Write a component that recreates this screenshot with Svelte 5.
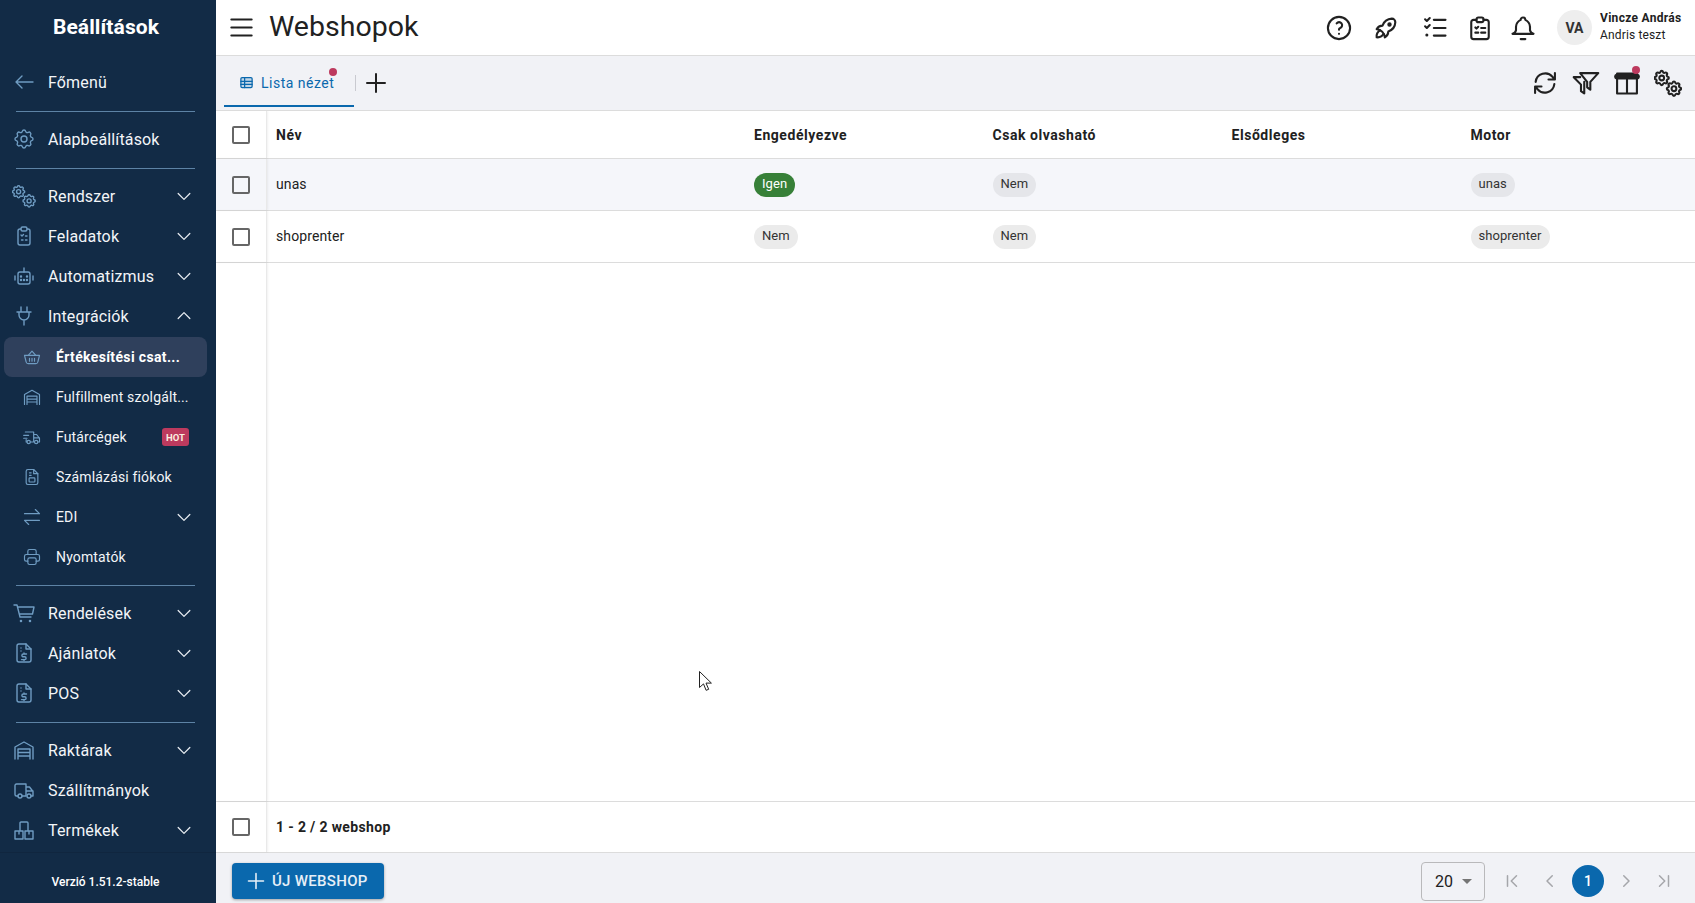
<script lang="ts">
  const gear = "M10.325 4.317c.426 -1.756 2.924 -1.756 3.35 0a1.724 1.724 0 0 0 2.573 1.066c1.543 -.94 3.31 .826 2.37 2.37a1.724 1.724 0 0 0 1.065 2.572c1.756 .426 1.756 2.924 0 3.35a1.724 1.724 0 0 0 -1.066 2.573c.94 1.543 -.826 3.31 -2.37 2.37a1.724 1.724 0 0 0 -2.572 1.065c-.426 1.756 -2.924 1.756 -3.35 0a1.724 1.724 0 0 0 -2.573 -1.066c-1.543 .94 -3.31 -.826 -2.37 -2.37a1.724 1.724 0 0 0 -1.065 -2.572c-1.756 -.426 -1.756 -2.924 0 -3.35a1.724 1.724 0 0 0 1.066 -2.573c-.94 -1.543 .826 -3.31 2.37 -2.37c1 .608 2.296 .07 2.572 -1.065z";
  const gearFull = `<path d="${gear}"/><circle cx="12" cy="12" r="3"/>`;
  const gearsInner = `<g transform="translate(-1.56 -.46) scale(.68)" style="stroke-width:var(--gw,2.6)">${gearFull}</g><g transform="translate(8.94 8.74) scale(.68)" style="stroke-width:var(--gw,2.6)">${gearFull}</g>`;

  const icons: Record<string, string> = {
    back: '<path d="M21 12H4M10 6l-6 6 6 6"/>',
    gear: gearFull,
    gears: gearsInner,
    task: '<path d="M9 5H8a2 2 0 0 0-2 2v12a2 2 0 0 0 2 2h8a2 2 0 0 0 2-2V7a2 2 0 0 0-2-2h-1"/><rect x="9" y="3" width="6" height="4" rx="1.5"/><path d="M9 11l1 1 1.5-1.5M13.5 12H15M9.5 16h1.5M13.5 16H15"/>',
    robot: '<rect x="6" y="8" width="12" height="12" rx="2"/><path d="M12 8V4M3 12v4M21 12v4"/><path d="M9 12.5h.01M15 12.5h.01M9 16h.01M12 16h.01M15 16h.01" stroke-width="2.4"/>',
    plug: '<path d="M9 8V3M15 8V3M5 8h14M7 8v3a5 5 0 0 0 10 0V8M12 16v5"/>',
    basket: '<path d="M7.5 10L12 5l4.5 5"/><path d="M3 10h18l-2 8a2.5 2.5 0 0 1-2.4 2H7.4A2.5 2.5 0 0 1 5 18z"/><path d="M9 13.5v3.5M12 13.5v3.5M15 13.5v3.5"/>',
    warehouse: '<path d="M3 21V9l9-5 9 5v12"/><path d="M6 21V11h12v10M6 14.5h12M6 18h12"/>',
    truck: '<circle cx="8" cy="18" r="2"/><circle cx="17" cy="18" r="2"/><path d="M6 18H4.5A1.5 1.5 0 0 1 3 16.5V7.5A1.5 1.5 0 0 1 4.5 6H14v12h-4M14 9h3.5l3.5 4.5V18h-2M14 13h7"/>',
    truckFast: '<circle cx="8" cy="18" r="2"/><circle cx="17" cy="18" r="2"/><path d="M6 18H5v-3M4 6h10v12h-4M2 10h6M2 13.5h4M14 9h3.5l3.5 4.5V18h-2M14 13h7"/>',
    invoice: '<path d="M14 3v5h5"/><path d="M17 21H7a2 2 0 0 1-2-2V5a2 2 0 0 1 2-2h7l5 5v11a2 2 0 0 1-2 2z"/><rect x="8.5" y="13" width="7" height="5" rx="1"/><path d="M9 7h2M9 10h2"/>',
    transfer: '<path d="M3 8h18M16 3l5 5M21 16H3M8 21l-5-5"/>',
    printer: '<path d="M17 17h2a2 2 0 0 0 2-2v-4a2 2 0 0 0-2-2H5a2 2 0 0 0-2 2v4a2 2 0 0 0 2 2h2"/><path d="M17 9V5a2 2 0 0 0-2-2H9a2 2 0 0 0-2 2v4"/><rect x="7" y="13" width="10" height="8" rx="2"/>',
    cart: '<path d="M2 4h3l3 12h11M5.6 6H22l-1.5 7H7.5"/><path d="M9 20h.01M18 20h.01" stroke-width="2.6"/>',
    quote: '<path d="M14 3v5h5"/><path d="M17 21H7a2 2 0 0 1-2-2V5a2 2 0 0 1 2-2h7l5 5v11a2 2 0 0 1-2 2z"/><path d="M14.5 13h-3.2a1.4 1.4 0 0 0 0 2.8h1.4a1.4 1.4 0 0 1 0 2.8H9.5M12 12v1M12 18.5v1M9 7h.01M9 10h.01"/>',
    boxes: '<path d="M3 13h8v8H3zM13 13h8v8h-8zM8 13V5a1 1 0 0 1 1-1h6a1 1 0 0 1 1 1v8M7 13v3M17 13v3"/>',
    help: '<circle cx="12" cy="12" r="9.5"/><path d="M12 17v.01M12 13.5a1.5 1.5 0 0 1 1-1.5 2.6 2.6 0 1 0-3-4"/>',
    rocket: '<path d="M4 13a8 8 0 0 1 7 7 6 6 0 0 0 3-5 9 9 0 0 0 6-8 3 3 0 0 0-3-3 9 9 0 0 0-8 6 6 6 0 0 0-5 3"/><path d="M7 14a6 6 0 0 0-3 6 6 6 0 0 0 6-3"/><circle cx="15" cy="9" r="1"/>',
    checks: '<path d="M3.5 4.5L5 6l2.5-2.5M3.5 10.5L5 12l2.5-2.5"/><path d="M5 18h.01" stroke-width="2.6"/><path d="M11 5h10M11 12h10M11 18.5h10"/>',
    clipboard: '<path d="M9 5H6.5a2 2 0 0 0-2 2v12.5a2 2 0 0 0 2 2h11a2 2 0 0 0 2-2V7a2 2 0 0 0-2-2H15"/><rect x="9" y="3" width="6" height="4" rx="1.5"/><path d="M8 11.5l1 1 1.5-1.5M13 12h3.5M8 16h2.5M13 16h3.5"/>',
    bell: '<path d="M10 5a2 2 0 1 1 4 0 7 7 0 0 1 4 6v3a4 4 0 0 0 3 3H3a4 4 0 0 0 3-3v-3a7 7 0 0 1 4-6"/><path d="M10 21.5h4"/>',
    refresh: '<path d="M4 11a8.2 8.2 0 0 1 14.5-4.2L20.5 9M20.5 3.5V9H15"/><path d="M20 13a8.2 8.2 0 0 1-14.5 4.2L3.5 15M3.5 20.5V15H9"/>',
    filter: '<path d="M7 3.5h15.5L15.7 11v6.7L13 15.7V11zM7 7H1.5l6.2 6.4V19l2.8 2V11"/>',
    columns: '<path d="M3.5 4h17v17h-17zM12 9v12"/><path d="M3.5 6.5h17" stroke-width="5"/>',
    tablist: '<rect x="3" y="4" width="18" height="16" rx="2" fill="currentColor" fill-opacity=".2"/><path d="M3 10h18M3 15h18M9 4v16"/>',
    plus: '<path d="M12 3v18M3 12h18"/>',
    menu: '<path d="M3 4.9h18M3 12h18M3 19.1h18"/>',
    down: '<path d="M5 9l7 7 7-7"/>',
    up: '<path d="M5 15l7-7 7 7"/>',
    first: '<path d="M6 5v14M18 5l-7 7 7 7"/>',
    prev: '<path d="M15 5l-7 7 7 7"/>',
    next: '<path d="M9 5l7 7-7 7"/>',
    last: '<path d="M18 5v14M6 5l7 7-7 7"/>',
  };

  type Item = { type?: "hr"; label?: string; icon?: string; caret?: "down" | "up"; sub?: boolean; active?: boolean; hot?: boolean };

  const nav: Item[] = [
    { label: "Főmenü", icon: "back" },
    { type: "hr" },
    { label: "Alapbeállítások", icon: "gear" },
    { type: "hr" },
    { label: "Rendszer", icon: "gears", caret: "down" },
    { label: "Feladatok", icon: "task", caret: "down" },
    { label: "Automatizmus", icon: "robot", caret: "down" },
    { label: "Integrációk", icon: "plug", caret: "up" },
    { label: "Értékesítési csat...", icon: "basket", sub: true, active: true },
    { label: "Fulfillment szolgált...", icon: "warehouse", sub: true },
    { label: "Futárcégek", icon: "truckFast", sub: true, hot: true },
    { label: "Számlázási fiókok", icon: "invoice", sub: true },
    { label: "EDI", icon: "transfer", sub: true, caret: "down" },
    { label: "Nyomtatók", icon: "printer", sub: true },
    { type: "hr" },
    { label: "Rendelések", icon: "cart", caret: "down" },
    { label: "Ajánlatok", icon: "quote", caret: "down" },
    { label: "POS", icon: "quote", caret: "down" },
    { type: "hr" },
    { label: "Raktárak", icon: "warehouse", caret: "down" },
    { label: "Szállítmányok", icon: "truck" },
    { label: "Termékek", icon: "boxes", caret: "down" },
  ];

  const columns = ["Név", "Engedélyezve", "Csak olvasható", "Elsődleges", "Motor"];
  const rows = [
    { name: "unas", enabled: true, readonly: false, motor: "unas" },
    { name: "shoprenter", enabled: false, readonly: false, motor: "shoprenter" },
  ];
</script>

{#snippet ico(name: string, cls = "")}
  <svg class="ico {cls}" viewBox="0 0 24 24" fill="none" stroke="currentColor" stroke-linecap="round" stroke-linejoin="round">{@html icons[name]}</svg>
{/snippet}

<div class="app">
  <aside class="side">
    <div class="brand">Beállítások</div>
    <nav class="menu">
      {#each nav as n}
        {#if n.type === "hr"}
          <div class="rule"></div>
        {:else}
          <div class="item" class:sub={n.sub} class:active={n.active}>
            {@render ico(n.icon ?? "", "lead")}
            <span class="lbl">{n.label}</span>
            {#if n.hot}<span class="hot">HOT</span>{/if}
            {#if n.caret}{@render ico(n.caret, "caret")}{/if}
          </div>
        {/if}
      {/each}
    </nav>
    <div class="ver">Verzió 1.51.2-stable</div>
  </aside>

  <main class="main">
    <header class="top">
      <button class="ham">{@render ico("menu")}</button>
      <h1>Webshopok</h1>
      <div class="topicons">
        {@render ico("help")}
        {@render ico("rocket")}
        {@render ico("checks")}
        {@render ico("clipboard")}
        {@render ico("bell")}
      </div>
      <div class="avatar">VA</div>
      <div class="who">
        <b>Vincze András</b>
        <span>Andris teszt</span>
      </div>
    </header>

    <div class="bar">
      <div class="tab">
        {@render ico("tablist")}
        <span>Lista nézet</span>
        <i class="dot"></i>
      </div>
      <div class="sep"></div>
      <div class="add">{@render ico("plus")}</div>
      <div class="tools">
        {@render ico("refresh")}
        {@render ico("filter")}
        <span class="colwrap">{@render ico("columns")}<i class="dot"></i></span>
        {@render ico("gears")}
      </div>
    </div>

    <div class="table">
      <div class="tr head">
        <div class="cbcell"><span class="cb"></span></div>
        {#each columns as c}<div class="td">{c}</div>{/each}
      </div>
      {#each rows as r, i}
        <div class="tr row" class:hl={i === 0}>
          <div class="cbcell"><span class="cb"></span></div>
          <div class="td">{r.name}</div>
          <div class="td">
            {#if r.enabled}<span class="chip yes">Igen</span>{:else}<span class="chip">Nem</span>{/if}
          </div>
          <div class="td"><span class="chip">{r.readonly ? "Igen" : "Nem"}</span></div>
          <div class="td"></div>
          <div class="td"><span class="chip">{r.motor}</span></div>
        </div>
      {/each}
      <div class="fill"><div class="cbcell"></div></div>
      <div class="tr sum">
        <div class="cbcell"><span class="cb"></span></div>
        <div class="count">1 - 2 / 2 webshop</div>
      </div>
    </div>

    <footer class="foot">
      <button class="new">{@render ico("plus")}ÚJ WEBSHOP</button>
      <div class="select">20<i class="tri"></i></div>
      <div class="pager">
        <span class="pg">{@render ico("first")}</span>
        <span class="pg">{@render ico("prev")}</span>
        <span class="pg cur">1</span>
        <span class="pg">{@render ico("next")}</span>
        <span class="pg">{@render ico("last")}</span>
      </div>
    </footer>
  </main>

  <svg class="cursor" width="14" height="21" viewBox="0 0 14 21">
    <path d="M.5.5v16l4-3.6 2.6 6.4 2.6-1-2.7-6.2h5.4z" fill="#fff" stroke="#222" stroke-width="1"/>
  </svg>
</div>

<style>
  :global(body) { margin: 0; font-family: Roboto, "Liberation Sans", sans-serif; color: #212121; background: #fff; overflow: hidden; }
  .app { display: flex; height: 100vh; }
  .ico { width: 24px; height: 24px; stroke-width: 2; display: block; flex: none; }

  .side { width: 216px; flex: none; background: #122b46; color: #f2f5f8; display: flex; flex-direction: column; }
  .brand { height: 62px; padding: 0 4px 8px 0; box-sizing: border-box; display: flex; align-items: center; justify-content: center; font-size: 21px; font-weight: 700; letter-spacing: .1px; color: #fff; }
  .menu { flex: 1; min-height: 0; }
  .rule { height: 1px; margin: 9px 21px 7px 16px; background: #5d83a5; }
  .item { height: 40px; display: flex; align-items: center; font-size: 16px; letter-spacing: .15px; padding-left: 12px; position: relative; }
  .item .lbl { margin-left: 12px; white-space: nowrap; }
  .item :global(.lead) { color: #6f9cc2; stroke-width: 1.4; --gw: 2; }
  .item :global(.caret) { position: absolute; right: 22px; width: 20px; height: 20px; stroke-width: 1.5; color: #e8edf2; }
  .item.sub { font-size: 14px; margin: 0 9px 0 4px; padding-left: 18px; border-radius: 8px; }
  .item.sub :global(.lead) { width: 20px; height: 20px; }
  .item.sub .lbl { margin-left: 14px; }
  .item.sub :global(.caret) { right: 13px; }
  .item.sub.active { margin-top: 1px; background: #2f405c; font-weight: 700; letter-spacing: .35px; color: #fff; }
  .item.sub + .rule { margin-top: 8px; }
  .hot { position: absolute; left: 158px; top: 11px; width: 27px; height: 18px; border-radius: 3px; background: #bd3a5e; color: #fbeee0; font-size: 9.5px; letter-spacing: 0; font-weight: 700; display: flex; align-items: center; justify-content: center; }
  .ver { height: 51px; border-top: 1px solid #10263f; box-sizing: border-box; padding: 7px 5px 0 0; display: flex; align-items: center; justify-content: center; font-size: 12px; font-weight: 500; color: #fff; }

  .main { flex: 1; min-width: 0; display: flex; flex-direction: column; }
  .top { height: 56px; box-sizing: border-box; border-bottom: 1px solid #dcdcdc; display: flex; align-items: center; padding-left: 12px; flex: none; }
  .ham { border: 0; background: none; padding: 0; color: #212121; }
  .ham :global(.ico) { width: 27px; height: 27px; stroke-width: 1.9; }
  h1 { margin: 0 0 0 14px; font-size: 28.5px; font-weight: 400; line-height: 1; }
  .topicons { margin-left: auto; display: flex; align-items: center; }
  .topicons :global(.ico) { width: 28px; height: 28px; stroke-width: 1.8; }
  .topicons :global(.ico:nth-child(1)) { margin-right: 19px; }
  .topicons :global(.ico:nth-child(2)) { margin-right: 21px; }
  .topicons :global(.ico:nth-child(3)) { margin-right: 17px; }
  .topicons :global(.ico:nth-child(4)) { margin-right: 15px; }
  .avatar { width: 35px; height: 35px; border-radius: 50%; background: #eee; color: #333; margin-left: 20px; display: flex; align-items: center; justify-content: center; font-size: 14px; font-weight: 700; }
  .who { margin: -2px 0 0 8px; width: 95px; display: flex; flex-direction: column; font-size: 12px; line-height: 17px; letter-spacing: .15px; }
  .who b { font-weight: 700; letter-spacing: .3px; white-space: nowrap; }

  .bar { height: 55px; box-sizing: border-box; background: #f1f2f6; border-bottom: 1px solid #dcdcdc; display: flex; align-items: center; flex: none; position: relative; }
  .tab { margin-left: 8px; width: 130px; height: 46px; margin-top: 1px; box-sizing: border-box; border-bottom: 2px solid #0a68ad; display: flex; align-items: center; padding-left: 15px; gap: 7px; color: #0a68ad; font-size: 14px; letter-spacing: .5px; position: relative; }
  .tab :global(.ico) { width: 15px; height: 15px; stroke-width: 2; }
  .dot { position: absolute; width: 8px; height: 8px; border-radius: 50%; background: #bd3a5e; }
  .tab .dot { left: 105px; top: 7px; }
  .sep { width: 1px; height: 16px; background: #c9cad0; margin-left: 1px; margin-top: -1px; }
  .add { margin-left: 8px; }
  .add :global(.ico) { width: 24px; height: 24px; stroke-width: 2; }
  .tools { margin-left: auto; margin-right: 13px; display: flex; align-items: center; gap: 13px; }
  .tools :global(.ico) { width: 28px; height: 28px; stroke-width: 1.8; }
  .colwrap { position: relative; display: block; }
  .colwrap .dot { right: 1px; top: -3px; }

  .table { flex: 1; min-height: 0; display: flex; flex-direction: column; }
  .tr { display: grid; grid-template-columns: 51px 479px 238.5px 239px 239px 1fr; align-items: stretch; font-size: 14px; letter-spacing: .1px; box-sizing: border-box; border-bottom: 1px solid #dcdcdc; flex: none; }
  .cbcell { width: 51px; box-sizing: border-box; border-right: 1px solid #e9e9e9; box-shadow: 1px 0 2px rgba(0,0,0,.06); display: flex; align-items: center; justify-content: center; }
  .cb { width: 18px; height: 18px; box-sizing: border-box; border: 2px solid #666; border-radius: 2px; display: block; }
  .td { padding-left: 8px; display: flex; align-items: center; }
  .td:nth-child(2) { padding-left: 9px; }
  .row .td:nth-child(2) { padding-bottom: 2px; }
  .head { height: 48px; font-weight: 700; letter-spacing: .55px; }
  .row { height: 52px; }
  .hl { background: #f5f6fa; }
  .chip { height: 24px; box-sizing: border-box; padding: 0 8px 2px; border-radius: 12px; background: #ebebeb; color: #333; font-size: 13px; letter-spacing: .05px; display: inline-flex; align-items: center; }
  .hl .chip { background: #e5e6ea; }
  .hl .chip.yes, .chip.yes { background: #378038; color: #fff; }
  .fill { flex: 1; min-height: 0; display: flex; border-bottom: 1px solid #dcdcdc; }
  .sum { height: 51px; display: flex; border-bottom: 1px solid #dcdcdc; }
  .count { padding: 0 0 1px 9px; display: flex; align-items: center; font-weight: 700; letter-spacing: .35px; }

  .foot { height: 50px; box-sizing: border-box; background: #f1f2f6; display: flex; align-items: center; padding: 6px 0 0 16px; flex: none; }
  .new { height: 36px; width: 152px; border: 0; border-radius: 4px; background: #0a68ad; color: #e6eff7; font: 500 15px Roboto, sans-serif; letter-spacing: .3px; display: flex; align-items: center; padding: 0 0 0 14px; gap: 6px; box-shadow: 0 1px 3px rgba(0,0,0,.35); }
  .new :global(.ico) { width: 20px; height: 20px; stroke-width: 1.9; }
  .select { margin-left: auto; width: 64px; height: 39px; box-sizing: border-box; border: 1px solid #b9b9bb; border-radius: 4px; display: flex; align-items: center; padding-left: 13px; font-size: 16px; gap: 9px; }
  .tri { width: 0; height: 0; border: 5px solid transparent; border-top-color: #757575; border-bottom: 0; }
  .pager { display: flex; align-items: center; margin: 0 15px 0 11px; gap: 6px; }
  .pg { width: 32px; height: 32px; display: flex; align-items: center; justify-content: center; color: #a5a6aa; }
  .pg :global(.ico) { width: 18px; height: 18px; stroke-width: 2; }
  .cur { background: #0a68ad; color: #fff; border-radius: 50%; font-size: 14px; font-weight: 500; }

  .cursor { position: absolute; left: 699px; top: 671px; }
</style>
